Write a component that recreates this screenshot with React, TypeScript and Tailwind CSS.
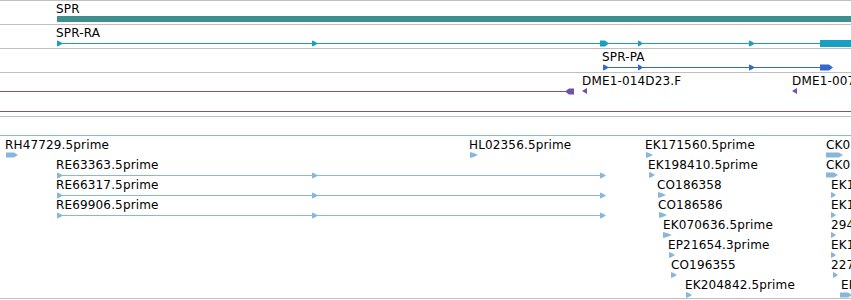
import React from "react";

type Lbl = { x: number; y: number; t: string };

const TEAL = "#3f8f8f";
const CYAN = "#1a9fc0";
const BLUE = "#3568cc";
const PURPLE = "#7052a6";
const EST = "#88b7dc";

function tri(x0: number, x1: number, yc: number, h: number) {
  const y0 = yc - h / 2;
  const y1 = yc + h / 2;
  const m = x0 + (x1 - x0) * 0.45;
  return `${x0},${y0} ${m},${y0 + 1} ${x1},${yc} ${m},${y1 - 1} ${x0},${y1}`;
}

function block(x0: number, x1: number, yc: number, h: number, tip = 4) {
  const y0 = yc - h / 2;
  const y1 = yc + h / 2;
  return `${x0},${y0} ${x1 - tip},${y0} ${x1},${yc} ${x1 - tip},${y1} ${x0},${y1}`;
}

function blockLeft(x0: number, x1: number, yc: number, h: number, tip = 4) {
  const y0 = yc - h / 2;
  const y1 = yc + h / 2;
  return `${x0},${yc} ${x0 + tip},${y0} ${x1},${y0} ${x1},${y1} ${x0 + tip},${y1}`;
}

function triLeft(x0: number, x1: number, yc: number, h: number) {
  return `${x0},${yc} ${x1},${yc - h / 2} ${x1},${yc + h / 2}`;
}

function Track({
  top,
  inner,
  className,
  labels,
  children,
}: {
  top: number;
  inner: number;
  className: string;
  labels: Lbl[];
  children: React.ReactNode;
}) {
  return (
    <div className={`relative shrink-0 border-b border-[#c0c0c0] ${className}`}>
      <svg
        className="absolute left-0 top-0 block"
        width={851}
        height={inner}
        viewBox={`0 ${top} 851 ${inner}`}
      >
        {children}
      </svg>
      {labels.map((l, i) => (
        <span
          key={i}
          className="absolute whitespace-nowrap text-[12px] leading-[14px] tracking-[0.15px] text-black"
          style={{ left: l.x, top: l.y - top }}
        >
          {l.t}
        </span>
      ))}
    </div>
  );
}

type EstF = { k: number; lx: number; t: string; x0: number; x1: number; kind: "tri" | "block" | "line" };
const estFeatures: EstF[] = [
  { k: 0, lx: 5, t: "RH47729.5prime", x0: 6, x1: 18, kind: "block" },
  { k: 0, lx: 469, t: "HL02356.5prime", x0: 470, x1: 478, kind: "tri" },
  { k: 0, lx: 645, t: "EK171560.5prime", x0: 646, x1: 653, kind: "tri" },
  { k: 0, lx: 826, t: "CK0", x0: 826, x1: 843, kind: "block" },
  { k: 1, lx: 56, t: "RE63363.5prime", x0: 57, x1: 600, kind: "line" },
  { k: 1, lx: 648, t: "EK198410.5prime", x0: 649, x1: 655, kind: "tri" },
  { k: 1, lx: 826, t: "CK0", x0: 826, x1: 838, kind: "block" },
  { k: 2, lx: 56, t: "RE66317.5prime", x0: 57, x1: 600, kind: "line" },
  { k: 2, lx: 657, t: "CO186358", x0: 658, x1: 666, kind: "tri" },
  { k: 2, lx: 831, t: "EK1", x0: 831, x1: 836, kind: "tri" },
  { k: 3, lx: 56, t: "RE69906.5prime", x0: 57, x1: 600, kind: "line" },
  { k: 3, lx: 658, t: "CO186586", x0: 659, x1: 667, kind: "tri" },
  { k: 3, lx: 831, t: "EK1", x0: 831, x1: 836, kind: "tri" },
  { k: 4, lx: 663, t: "EK070636.5prime", x0: 663, x1: 672, kind: "tri" },
  { k: 4, lx: 831, t: "294", x0: 831, x1: 836, kind: "tri" },
  { k: 5, lx: 668, t: "EP21654.3prime", x0: 669, x1: 675, kind: "tri" },
  { k: 5, lx: 831, t: "EK1", x0: 831, x1: 836, kind: "tri" },
  { k: 6, lx: 671, t: "CO196355", x0: 671, x1: 677, kind: "tri" },
  { k: 6, lx: 831, t: "227", x0: 833, x1: 838, kind: "tri" },
  { k: 7, lx: 685, t: "EK204842.5prime", x0: 686, x1: 692, kind: "tri" },
  { k: 7, lx: 841, t: "EH", x0: 840, x1: 852, kind: "block" },
];

export default function App() {
  return (
    <div className="h-[300px] w-[851px] overflow-hidden bg-white font-['DejaVu_Sans',sans-serif] text-black">
      <div className="flex flex-col border-t border-[#c0c0c0]">
        {/* Gene track */}
        <Track top={1} inner={23} className="h-[24px]" labels={[{ x: 56, y: 2, t: "SPR" }]}>
          <rect x={57} y={16} width={800} height={6} fill={TEAL} />
        </Track>

        {/* SPR-RA transcript */}
        <Track top={25} inner={23} className="h-[24px]" labels={[{ x: 56, y: 26, t: "SPR-RA" }]}>
          <rect x={57} y={43} width={800} height={1} fill={CYAN} />
          <polygon points={tri(57, 63, 43.5, 6)} fill={CYAN} />
          <polygon points={tri(312, 318, 43.5, 6)} fill={CYAN} />
          <polygon points={block(600, 609, 43.5, 6, 4)} fill={CYAN} />
          <polygon points={tri(638, 643, 43.5, 6)} fill={CYAN} />
          <polygon points={tri(749, 755, 43.5, 6)} fill={CYAN} />
          <rect x={820} y={40} width={40} height={7} fill={CYAN} />
        </Track>

        {/* SPR-PA protein */}
        <Track top={49} inner={23} className="h-[24px]" labels={[{ x: 602, y: 50, t: "SPR-PA" }]}>
          <rect x={603} y={67} width={225} height={1} fill={BLUE} />
          <polygon points={tri(603, 609, 67.5, 6)} fill={BLUE} />
          <polygon points={tri(638, 643, 67.5, 6)} fill={BLUE} />
          <polygon points={tri(749, 755, 67.5, 6)} fill={BLUE} />
          <polygon points={block(820, 833, 67.5, 6, 4)} fill={BLUE} />
        </Track>

        {/* Purple alignments */}
        <Track
          top={73}
          inner={43}
          className="h-[44px]"
          labels={[
            { x: 582, y: 74, t: "DME1-014D23.F" },
            { x: 792, y: 74, t: "DME1-007" },
          ]}
        >
          <rect x={0} y={91} width={567} height={1} fill={PURPLE} />
          <polygon points={blockLeft(565, 574, 91.5, 6, 4)} fill={PURPLE} />
          <polygon points={triLeft(582, 587, 91, 6)} fill={PURPLE} />
          <polygon points={triLeft(792, 797, 91, 6)} fill={PURPLE} />
          <rect x={0} y={111} width={851} height={1} fill={PURPLE} />
        </Track>

        {/* EST track */}
        <Track
          top={117}
          inner={181}
          className="h-[182px]"
          labels={estFeatures.map((f) => ({ x: f.lx, y: 138 + 20 * f.k, t: f.t }))}
        >
          <rect x={0} y={135} width={851} height={1} fill={EST} />
          {estFeatures.map((f, i) => {
            const yc = 155 + 20 * f.k;
            if (f.kind === "line") {
              return (
                <g key={i}>
                  <rect x={f.x0} y={yc} width={f.x1 - f.x0 + 2} height={1} fill={EST} />
                  <polygon points={tri(57, 63, yc + 0.5, 6)} fill={EST} />
                  <polygon points={tri(312, 318, yc + 0.5, 6)} fill={EST} />
                  <polygon points={tri(600, 606, yc + 0.5, 6)} fill={EST} />
                </g>
              );
            }
            if (f.kind === "block") {
              return <polygon key={i} points={block(f.x0, f.x1, yc, 5, 4)} fill={EST} />;
            }
            return <polygon key={i} points={tri(f.x0, f.x1, yc, 6)} fill={EST} />;
          })}
        </Track>
      </div>
    </div>
  );
}
